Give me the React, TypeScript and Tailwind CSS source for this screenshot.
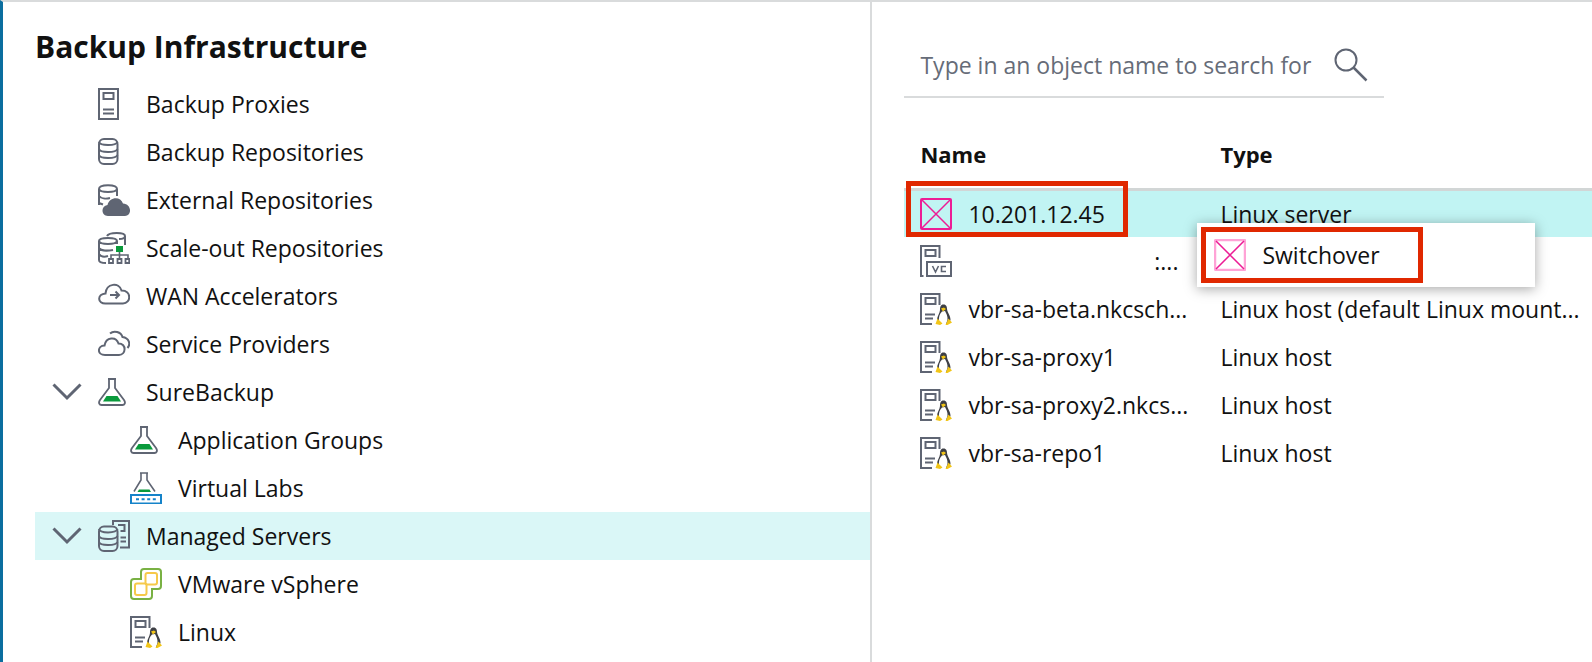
import type { ReactNode } from "react";

const GRAY = "#5f6573";
const GREEN = "#0a9a3c";

const Icon = ({ children }: { children: ReactNode }) => (
  <svg
    viewBox="0 0 32 32"
    className="w-8 h-8 shrink-0"
    fill="none"
    stroke={GRAY}
    strokeWidth="2"
    aria-hidden="true"
  >
    {children}
  </svg>
);

const ProxyIcon = () => (
  <Icon>
    <path d="M1 1H20V31H1ZM5.500 5H15.500V11H5.500ZM5 21.500H16M5 25.500H16" />
  </Icon>
);

const RepositoryIcon = () => (
  <Icon>
    <rect x="1" y="3" width="18.500" height="25" rx="5" />
    <path d="M1 6C2 10 18 10 19.500 6M1 13C2 17 18 17 19.500 13M1 19C2 23 18 23 19.500 19" />
  </Icon>
);

const ExternalIcon = () => (
  <Icon>
    <path d="M1 21V5C1 0 19 0 19 5V12M1 5C2 9 18 9 19 5M1 12C3 14.500 8 15 12 14M1 19L5 20.500" />
    <path
      d="M10 32C3 32 2.500 22 9.500 21C11 13 22.500 11.500 25 19.500C34 20 34 32 27 32Z"
      fill={GRAY}
      stroke="none"
    />
  </Icon>
);

const ScaleOutIcon = () => (
  <Icon>
    <path d="M9 4C11 0 27 0 27 4V13M21 7C24 7 27 6 27 4" />
    <path d="M8 31C4 31 1 30 1 28V9C1 5 19 5 19 9V12M1 9C2 13 18 13 19 9M1 16C3 19 10 19 15 18M1 22C3 25 7 25 10 24" />
    <path d="M21.500 19V26M13 26V23H30V26" strokeWidth="1.600" />
    <rect x="18" y="14" width="7" height="6" fill={GREEN} stroke="none" />
    <path d="M11 27H15V31H11ZM19.500 27H23.500V31H19.500ZM27.500 27H31.200V31H27.500Z" strokeWidth="1.800" />
  </Icon>
);

const WanIcon = () => (
  <Icon>
    <path d="M8 23.500C-1 24-1 14 7.500 13.500C8.500 3 21 2 23.500 10.500C34 10.500 33 23.500 25 23.500Z" />
    <path d="M12 15H21M17.500 11.500L21 15L17.500 18.500" />
  </Icon>
);

const ProvidersIcon = () => (
  <Icon>
    <path d="M7 27C-1 27-1 18 6.500 17.500C8 9 18 8 20.500 15.500C29 15.500 28 27 21 27Z" />
    <path d="M12 5.500C16 2 23 4 24.500 9C31 10 33 16 29.500 20" />
  </Icon>
);

const FlaskIcon = () => (
  <Icon>
    <path d="M10 3H18M11 3V12L2 24C0 27 1.500 29 3.500 29H24.500C26.500 29 28 27 26 24L17 12V3" strokeWidth="1.800" />
    <path d="M8.500 20H19.500L23 25.500H5Z" fill={GREEN} stroke="none" />
  </Icon>
);

const LabIcon = () => (
  <Icon>
    <path d="M10 1H18M11 1V8L4 19.500M17 1V8L25 19.500" strokeWidth="1.600" />
    <path d="M9 17.500H19.500L21 20H7.500Z" fill={GREEN} stroke="none" />
    <rect x="1" y="23" width="30" height="8.500" stroke="#1583c9" />
    <path d="M6 27.300H26" stroke="#1583c9" strokeDasharray="3 2.600" />
  </Icon>
);

const ManagedIcon = () => (
  <Icon>
    <path d="M15 5V1H31V27.500H22M20 5H26.500V11H22.500M22.500 17.500H28M22.500 21.500H28" />
    <rect x="1" y="6.500" width="18.500" height="24.500" rx="5" />
    <path d="M1 9C2 13.500 18 13.500 19.500 9M1 16C2 20 18 20 19.500 16M1 22C2 26 18 26 19.500 22" />
  </Icon>
);

const VmwareIcon = () => (
  <Icon>
    <path
      d="M14 1H28Q31 1 31 4V18Q31 21 28 21H22V28Q22 31 19 31H4Q1 31 1 28V14Q1 11 4 11H11V4Q11 1 14 1Z"
      stroke="#79b143"
    />
    <g stroke="#f6c94a">
      <rect x="15.500" y="5" width="11.500" height="11.500" rx="2" />
      <rect x="5" y="15.500" width="11.500" height="11.500" rx="2" />
    </g>
  </Icon>
);

const LinuxIcon = () => (
  <Icon>
    <path d="M12 31H1V1H19.500V12M5.500 5H15.500V11H5.500ZM5 21.500H15M5 25.500H13" />
    <path
      d="M23.500 11.500C20.500 11.500 20 14 20 17C20 20 17 23 17 27L20 31H28L30.500 27C30.500 22 27.500 20 27 16C27 14 26.500 11.500 23.500 11.500Z"
      fill="#3d3f45"
      stroke="none"
    />
    <path
      d="M22 18.500C19.500 21 18.500 24 19 28L22 31H26L27.500 27C28 23 26 20 25 18Z"
      fill="#fff"
      stroke="none"
    />
    <path
      d="M21 15.500L24 14.500L26 16L23 18.500ZM17.500 25.500L22.500 30.500L20 32L15.500 31ZM28.500 25.500L32 29.500L27.500 32H25.500Z"
      fill="#f2c517"
      stroke="none"
    />
  </Icon>
);

const VcIcon = () => (
  <Icon>
    <path d="M3.500 31H1V1H19.500V13M5.500 5H15.500V11H5.500Z" />
    <rect x="7" y="17" width="24" height="14" />
    <path d="M12.500 21L15.500 27L18.500 21M26 21.500H21.500V26.500H26" strokeWidth="1.600" />
  </Icon>
);

const CrossBoxIcon = ({ pale = false }: { pale?: boolean }) => (
  <Icon>
    <rect
      x="1"
      y="1"
      width="30"
      height="30"
      rx="1"
      stroke={pale ? "#ffa3d6" : "#ec1c95"}
      strokeWidth={pale ? "2.500" : "2"}
    />
    <path d="M2 2L30 30M30 2L2 30" stroke="#ec1c95" strokeWidth="1.500" />
  </Icon>
);

const Chevron = () => (
  <svg
    viewBox="0 0 30 18"
    className="w-[30px] h-[18px]"
    fill="none"
    stroke={GRAY}
    strokeWidth="3"
    aria-hidden="true"
  >
    <path d="M1.500 1.500L15 15L28.500 1.500" />
  </svg>
);

const tree = [
  { label: "Backup Proxies", icon: <ProxyIcon /> },
  { label: "Backup Repositories", icon: <RepositoryIcon /> },
  { label: "External Repositories", icon: <ExternalIcon /> },
  { label: "Scale-out Repositories", icon: <ScaleOutIcon /> },
  { label: "WAN Accelerators", icon: <WanIcon /> },
  { label: "Service Providers", icon: <ProvidersIcon /> },
  { label: "SureBackup", icon: <FlaskIcon />, open: true },
  { label: "Application Groups", icon: <FlaskIcon />, nested: true },
  { label: "Virtual Labs", icon: <LabIcon />, nested: true },
  { label: "Managed Servers", icon: <ManagedIcon />, open: true, active: true },
  { label: "VMware vSphere", icon: <VmwareIcon />, nested: true },
  { label: "Linux", icon: <LinuxIcon />, nested: true },
];

const servers = [
  { name: "vbr-sa-beta.nkcsch...", type: "Linux host (default Linux mount..." },
  { name: "vbr-sa-proxy1", type: "Linux host" },
  { name: "vbr-sa-proxy2.nkcs...", type: "Linux host" },
  { name: "vbr-sa-repo1", type: "Linux host" },
];

const Sidebar = () => {
  return (
    <nav className="border-r-2 border-[#d9dbdc] pl-8">
      <h1 className="pt-6 pb-3 text-[30px] leading-[42px] font-bold">
        Backup Infrastructure
      </h1>
      <ul>
        {tree.map((item) => (
          <li key={item.label} className={item.active ? "bg-[#daf7f7]" : ""}>
            <a
              href="#"
              className={`flex items-center h-12 gap-4 ${
                item.nested ? "pl-[95px]" : item.open ? "pl-[17px]" : "pl-[63px]"
              }`}
            >
              {item.open && <Chevron />}
              {item.icon}
              {item.label}
            </a>
          </li>
        ))}
      </ul>
    </nav>
  );
};

const SearchBox = () => {
  return (
    <label className="flex items-center justify-between w-[480px] max-w-full h-16 px-4 border-b-2 border-[#d9dbdc]">
      <input
        type="text"
        aria-label="Search objects"
        placeholder="Type in an object name to search for"
        className="flex-1 min-w-0 outline-none placeholder:text-[#666c78] placeholder:opacity-100"
      />
      <svg
        viewBox="0 0 34 34"
        className="w-[34px] h-[34px] shrink-0"
        fill="none"
        stroke={GRAY}
        strokeWidth="2"
        aria-hidden="true"
      >
        <circle cx="12" cy="12" r="10.500" />
        <path d="M19.500 19.500L32.500 32.500" strokeWidth="2.500" />
      </svg>
    </label>
  );
};

const ContextMenu = () => {
  return (
    <div className="absolute z-10 top-8 left-[-7px] w-[338px] p-1 bg-white shadow-[0_2px_12px_rgba(0,0,0,0.35)]">
      <button
        type="button"
        className="flex items-center gap-4 w-[222px] h-14 pl-2 border-5 border-[#e02800]"
      >
        <CrossBoxIcon pale />
        Switchover
      </button>
    </div>
  );
};

const ServerTable = () => {
  return (
    <table className="w-full table-fixed text-left whitespace-nowrap">
      <thead className="text-[22px]">
        <tr className="h-16 border-b-[3px] border-[#d2d6d6]">
          <th className="w-[300px] pl-4 pb-1">Name</th>
          <th className="pl-4 pb-1">Type</th>
        </tr>
      </thead>
      <tbody>
        <tr className="h-12 bg-[#c1f4f3]">
          <td className="relative pl-4">
            <div className="flex items-center gap-4">
              <CrossBoxIcon />
              10.201.12.45
            </div>
            <div className="absolute -top-2.5 left-0.5 w-[222px] h-14 border-5 border-[#e02800]" />
          </td>
          <td className="relative pl-4">
            Linux server
            <ContextMenu />
          </td>
        </tr>
        <tr className="h-12">
          <td className="pl-4">
            <div className="flex items-center justify-between pr-[26px]">
              <VcIcon />
              :...
            </div>
          </td>
          <td />
        </tr>
        {servers.map((server) => (
          <tr key={server.name} className="h-12">
            <td className="pl-4">
              <div className="flex items-center gap-4">
                <LinuxIcon />
                {server.name}
              </div>
            </td>
            <td className="pl-4">{server.type}</td>
          </tr>
        ))}
      </tbody>
    </table>
  );
};

const App = () => {
  return (
    <div className="grid grid-cols-[870fr_720fr] min-h-screen overflow-hidden bg-white border-t-2 border-t-[#d9dbdc] border-l-3 border-l-[#0b6e9f] font-['Open_Sans',sans-serif] text-[23px] leading-8 text-[#111]">
      <Sidebar />
      <main className="pl-8 pt-8">
        <SearchBox />
        <div className="pt-[27px]">
          <ServerTable />
        </div>
      </main>
    </div>
  );
};

export default App;
